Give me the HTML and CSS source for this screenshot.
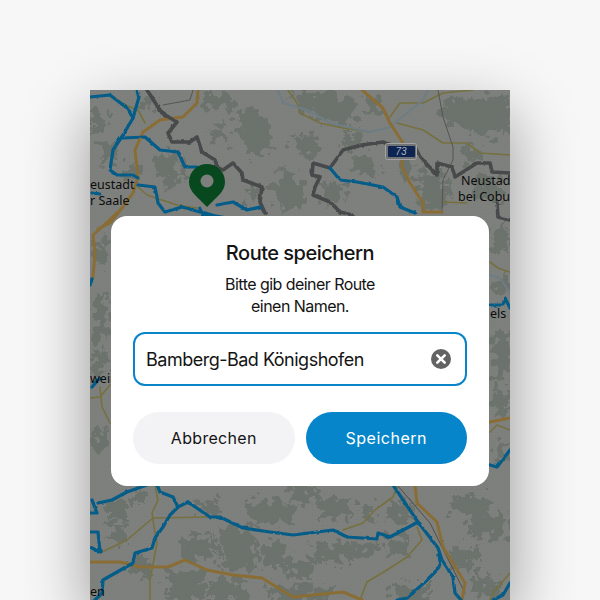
FILE: index.html
```html
<!DOCTYPE html>
<html lang="de">
<head>
    <meta charset="UTF-8">
    <meta name="viewport" content="width=device-width, initial-scale=1.0">
    <title>Route speichern</title>
    <link rel="stylesheet" href="styles.css">
</head>
<body>
    <div class="phone">
        <svg class="map" viewBox="90 90 420 510" width="420" height="510">
            <defs>
                <filter id="rough" x="-5%" y="-5%" width="110%" height="110%" color-interpolation-filters="sRGB">
                    <feTurbulence type="fractalNoise" baseFrequency="0.11" numOctaves="3" seed="4"/>
                    <feDisplacementMap in="SourceGraphic" scale="30" xChannelSelector="R" yChannelSelector="G"/>
                </filter>
                <filter id="wiggle" x="-5%" y="-5%" width="110%" height="110%" color-interpolation-filters="sRGB">
                    <feTurbulence type="fractalNoise" baseFrequency="0.14" numOctaves="2" seed="9"/>
                    <feDisplacementMap in="SourceGraphic" scale="2.5" xChannelSelector="R" yChannelSelector="G"/>
                </filter>
                <pattern id="grain" width="3" height="3" patternUnits="userSpaceOnUse">
                    <rect width="1" height="1" fill="#000" opacity="0.02"/>
                </pattern>
            </defs>
            <rect x="90" y="90" width="420" height="510" fill="#7e807d"/>

            <!-- forest -->
            <g fill="#6b736c" filter="url(#rough)">
                <path d="M200 93h30l4 12-14 8-16-6z"/>
                <path d="M237 112l20-4 14 18-2 26-18 2-10-18z"/>
                <path d="M290 95l40-4 28 10-4 22-30-2-24-10z"/>
                <path d="M277 175l18-4 10 22-4 20-20-4-8-16z"/>
                <path d="M443 100l67-6v38l-34 4-30-14z"/>
                <path d="M90 110l18 2-2 18-16 2z"/>
                <path d="M157 155l22-2 6 26-16 8-14-12z"/>
                <path d="M320 184l20-2 6 22-20 4z"/>
                <path d="M420 170l24 4 8 26-24 12-12-16z"/>
                <path d="M475 175h20l10 18-16 12-16-10z"/>
                <path d="M350 160l24-4 8 16-22 8z"/>
                <path d="M100 142l16-2 2 20-14 2z"/>
                <path d="M140 96l14 4-2 10-12-2z"/>
                <path d="M372 96l10 4-2 16-14-6z"/>
                <path d="M210 125l14 2 2 14-14 2z"/>
                <path d="M290 135l26 2 4 16-24 2z"/>
                <path d="M340 135l22 0 2 12-22 2z"/>
                <path d="M400 150l14 12-4 16-12-8z"/>
                <path d="M460 145l24 2 2 14-24 0z"/>
                <path d="M245 185l12 2 0 14-12 0z"/>
                <path d="M125 165l14 0 0 14-14 0z"/>
                <path d="M95 293l13 2-1 48-12-4z"/>
                <path d="M92 350l14 4-2 22-12-2z"/>
                <path d="M94 430l14-2 0 24-14 4z"/>
                <path d="M92 240l14-2 0 24-12 2z"/>
                <path d="M492 230l16-2 0 24-14 2z"/>
                <path d="M492 280l16-2 0 14-14 4z"/>
                <path d="M492 330l18-2v50l-16 2z"/>
                <path d="M494 388l16 2v20l-14 4z"/>
                <path d="M494 440l14-2v22l-14-2z"/>
                <path d="M247 500l46 0 2 22-46 2z"/>
                <path d="M287 487l33 0 0 13-30 2z"/>
                <path d="M320 497l30 0 0 20-30 0z"/>
                <path d="M220 527l33 0 2 40-34 2z"/>
                <path d="M180 537l37 0 0 23-36 0z"/>
                <path d="M260 543l27 0 0 24-26 0z"/>
                <path d="M287 560l26 0 0 17-26 0z"/>
                <path d="M310 543l33 0 0 20-32 0z"/>
                <path d="M340 543l37 0 0 14-36 0z"/>
                <path d="M167 570l36 0 0 32-36 0z"/>
                <path d="M207 580l40 0 0 22-40 0z"/>
                <path d="M270 584l60 4 0 14-60 0z"/>
                <path d="M387 500l26 0 0 20-26 0z"/>
                <path d="M450 497l37 0 0 16-37 0z"/>
                <path d="M450 547l30 0 0 20-30 0z"/>
                <path d="M470 513l37 0 0 24-37 0z"/>
                <path d="M103 503l24 0 0 17-24 0z"/>
                <path d="M110 523l17 0 0 20-17 0z"/>
                <path d="M393 583l34 0 0 20-34 0z"/>
                <path d="M470 575l30 0 0 20-30 0z"/>
                <path d="M130 490l14 0 0 12-14 0z"/>
                <path d="M200 500l22 0 0 12-22 0z"/>
                <path d="M360 505l14 0 0 14-14 0z"/>
                <path d="M385 535l24 0 0 20-24 0z"/>
                <path d="M130 560l20 0 0 16-20 0z"/>
            </g>
            <rect x="90" y="90" width="420" height="510" fill="url(#grain)"/>

            <g fill="none" stroke-linecap="round" stroke-linejoin="round">
                <!-- thin roads -->
                <g stroke="#76703f" stroke-width="1.6">
                    <path d="M113 97l12 8 13 5 7 13"/>
                    <path d="M138 187l9 8 30 10 20 3"/>
                    <path d="M288 90l9 13 3 10 20 10 23 5 27 4"/>
                    <path d="M390 117l10-14h23l20-10 30-3"/>
                    <path d="M397 123l26 7 20 13h24l13 10 30 2"/>
                    <path d="M443 202l24 1"/>
                    <path d="M490 262l8 6 12 4"/>
                    <path d="M490 432l7-7 13 5"/>
                    <path d="M155 485l3 15-6 13 3 20 2 10-7 37v20"/>
                    <path d="M102 552l25-12 26-22 57-1"/>
                    <path d="M343 530l20-7 12-13 18-13 4-10"/>
                    <path d="M417 527l5 13-15 17-20 13-20 12-7 18"/>
                    <path d="M510 573l-17 20-3 7"/>
                    <path d="M90 398l10-1 10-12"/>
                    <path d="M100 387l2 20 8 16"/>
                </g>
                <path d="M163 105l27-5 3-10" stroke="#55564f" stroke-width="1"/>
                <path d="M438 90l5 27 10 30v13l-10 20-1 33" stroke="#55564f" stroke-width="1"/>
                <path d="M397 485l33 38 35 70" stroke="#4e4e4b" stroke-width="1"/>
                <path d="M278 90l5 13 24 7 23 13 40 9 20-5 33-27 5-10" stroke="#6e7d85" stroke-width="2.2"/>
                <path d="M490 275l10 3 10 15" stroke="#6e7d85" stroke-width="2.2"/>

                <!-- main roads -->
                <g stroke="#8a6d35" stroke-width="3">
                    <path d="M198 90l-1 13-14 14-23 3-17 12-8 18 3 27-5 16-10 14-13 16-12 6"/>
                    <path d="M120 210l-18 17-9 8 2 18-2 24-3 6"/>
                    <path d="M362 90l21 18 7 15 13 20-1 24 8 16 13 20v9h19"/>
                    <path d="M90 562h30l20 5h28l17-7 22 10 26 5 29 3 31 19 50-5 19 8"/>
                    <path d="M415 485l2 18 20 19 6 25 22 36-3 17"/>
                    <path d="M490 422l20-4"/>
                </g>

                <!-- state border -->
                <g stroke="#47494b" stroke-width="3.6" filter="url(#wiggle)">
                    <path d="M147 90l13 20 2 3 15 9-9 11 4 9h18l7-5 5 15 13 8 2 7 6 3 10-7 9 10 1 7 19 7-2 15 5 11"/>
                    <path d="M330 168l-17-5-1 12 8 2-5 10-2 8 17 7 10 10 12 3"/>
                    <path d="M330 168l13-18 19-5 21-3 7 3"/>
                    <path d="M415 147l5 10 17 18v-12l15 4 3 10 22-14h13l2 9 18 1"/>
                    <path d="M497 203l1 14 12 3"/>
                </g>

                <!-- cycle routes -->
                <g stroke="#045c88" stroke-width="3.2" filter="url(#wiggle)">
                    <path d="M90 97l20-2 17 13 6 10-10 17-10 15-3 20 7 5h16l5 3"/>
                    <path d="M137 90l2 7-6 21"/>
                    <path d="M123 138l22-1 15 13 18 2 7 15 12 0"/>
                    <path d="M138 185l17 2 3 16 7 9 17-5 18 5"/>
                    <path d="M92 193l8 1"/>
                    <path d="M217 205l16-3 14 8 13-3"/>
                    <path d="M330 168l10 12 17 2 26 5 14 10 3 10 15 6"/>
                    <path d="M490 305h13l2-7 5 10"/>
                    <path d="M490 465l7 2 13-17"/>
                    <path d="M92 387l8-9"/>
                    <path d="M90 285l2-6"/>
                    <path d="M92 500l5 13h-7"/>
                    <path d="M98 503l14-3 15-8 20-7"/>
                    <path d="M157 485l3 7 13 5 5 10"/>
                    <path d="M188 502l-10 5-8 8-7 12-8 11-3 10-17 5-2 10-30 17-1 13-7 7"/>
                    <path d="M188 502l22 15h10l23 11 27 4 23 3 40-5 14 7 30 2 1-6 12 4 17-9 11-6"/>
                    <path d="M393 485l25 37 20 26 4 12 11 17 2 16 6 7"/>
                    <path d="M438 555l2 12-15 15-18 16-10 2"/>
                    <path d="M510 583l-7 12-10 5"/>
                    <path d="M90 532h8l2 20-10-5"/>
                </g>
            </g>
            <path d="M200 217l4-6 10 3 16 3z" fill="#045c88"/>
            <path d="M199 207l5 9" stroke="#045c88" stroke-width="2.8"/>

            <!-- autobahn sign -->
            <rect x="385.5" y="143.5" width="31" height="16" rx="2" fill="#707274" stroke="#a2a4a5"/>
            <rect x="388" y="146" width="27" height="11" rx="1" fill="#0d2452"/>
            <text class="sign" x="401" y="155" text-anchor="middle">73</text>

            <!-- place names, cut by the screen edge -->
            <text class="place" x="90" y="189">eustadt</text>
            <text class="place" x="90" y="205">r Saale</text>
            <text class="place" x="461" y="185">Neustad</text>
            <text class="place" x="458" y="201">bei Cobu</text>
            <text class="place" x="90" y="383">wein</text>
            <text class="place" x="490" y="318">els</text>
            <text class="place" x="90" y="596">en</text>

            <!-- location pin -->
            <path d="M207 164a18 18 0 0 1 18 18c0 8-6 13-10 17l-8 8-8-8c-4-4-10-9-10-17a18 18 0 0 1 18-18z" fill="#07481f"/>
            <circle cx="207" cy="181" r="6.5" fill="#7d7f7c"/>
        </svg>

        <div class="dialog">
            <h1>Route speichern</h1>
            <p>Bitte gib deiner Route<br>einen Namen.</p>
            <div class="field">
                <span class="field-value">Bamberg-Bad Königshofen</span>
                <svg class="clear" viewBox="0 0 20 20" width="20" height="20">
                    <circle cx="10" cy="10" r="10" fill="#636363"/>
                    <path d="M6.3 6.3l7.4 7.4M13.7 6.3l-7.4 7.4" stroke="#fff" stroke-width="2.6" stroke-linecap="round"/>
                </svg>
            </div>
            <div class="buttons">
                <button class="btn btn-cancel">Abbrechen</button>
                <button class="btn btn-save">Speichern</button>
            </div>
        </div>
    </div>
</body>
</html>
```

FILE: styles.css
```css
body {
    margin: 0;
    height: 600px;
    overflow: hidden;
    background-color: #f7f7f7;
    font-family: Inter, "Liberation Sans", sans-serif;
    display: flex;
    justify-content: center;
    align-items: flex-start;
}

.phone {
    position: relative;
    width: 420px;
    height: 510px;
    margin-top: 90px;
    box-shadow: 0 24px 60px rgba(0, 0, 0, 0.4);
}

.map {
    display: block;
}

.place {
    font-family: "Noto Sans", sans-serif;
    font-size: 12.5px;
    fill: #0c0c0c;
}

.sign {
    font-family: "Liberation Sans", sans-serif;
    font-size: 10px;
    font-style: italic;
    fill: #aab2c0;
}

.dialog {
    position: absolute;
    left: 21px;
    top: 126px;
    width: 378px;
    height: 270px;
    box-sizing: border-box;
    padding: 25px 22px 0;
    background-color: #fff;
    border-radius: 16px;
    text-align: center;
    color: #141414;
}

h1 {
    margin: 0;
    font-size: 20px;
    line-height: 24px;
    font-weight: 500;
    letter-spacing: -0.5px;
}

p {
    margin: 8px 0 0;
    font-size: 16px;
    line-height: 22px;
    letter-spacing: -0.55px;
}

.field {
    display: flex;
    justify-content: space-between;
    align-items: center;
    height: 54px;
    box-sizing: border-box;
    margin-top: 15px;
    padding: 0 14px 0 11px;
    border: 2px solid #0a84c9;
    border-radius: 12px;
}

.field-value {
    font-size: 18px;
    letter-spacing: -0.5px;
}

.buttons {
    display: flex;
    gap: 11px;
    margin-top: 26px;
}

.btn {
    flex: 1;
    height: 52px;
    border: none;
    border-radius: 26px;
    font-family: inherit;
    font-size: 16px;
    letter-spacing: 0.3px;
}

.btn-cancel {
    background-color: #f3f3f5;
    color: #141414;
}

.btn-save {
    background-color: #0685ca;
    color: #fff;
    letter-spacing: 0.5px;
}
```
